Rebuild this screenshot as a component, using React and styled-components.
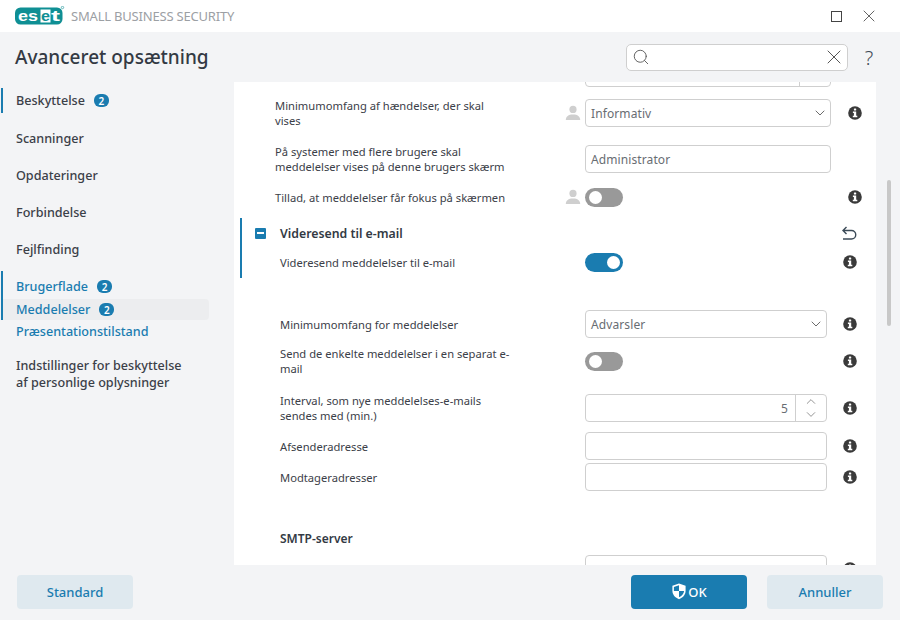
import React from 'react'
import styled, { createGlobalStyle } from 'styled-components'
import { ChevronDown, ChevronUp, Search, X } from 'lucide-react'

const Global = createGlobalStyle`
	html, body { margin: 0; padding: 0; height: 100%; overflow: hidden; }
	body { font-family: "Noto Sans", "Open Sans", sans-serif; color: #3b4048; }
	* { box-sizing: border-box; }
`

const NAV = [
	{ label: 'Beskyttelse', badge: 2, top: 6, bar: true },
	{ label: 'Scanninger', top: 13 },
	{ label: 'Opdateringer', top: 12 },
	{ label: 'Forbindelse', top: 12 },
	{ label: 'Fejlfinding', top: 12 },
]

function Logo() {
	return (
		<LogoSvg width="50" height="20" viewBox="0 0 50 20">
			<rect x="0" y="1.500" width="47.500" height="17" rx="5.500" fill="#0f8f94" />
			<rect x="25.500" y="3.500" width="10" height="13" fill="#fff" />
			<LogoText x="3" y="14.600" fill="#fff" textLength="20" lengthAdjust="spacingAndGlyphs">es</LogoText>
			<LogoText x="26" y="14.600" fill="#0f8f94" textLength="9" lengthAdjust="spacingAndGlyphs">e</LogoText>
			<LogoText x="36" y="14.600" fill="#fff" textLength="9" lengthAdjust="spacingAndGlyphs">t</LogoText>
			<circle cx="47.500" cy="1.500" r="1.200" fill="none" stroke="#0f8f94" strokeWidth=".6" />
		</LogoSvg>
	)
}

function InfoIcon() {
	return (
		<svg width="14" height="14" viewBox="0 0 14 14">
			<circle cx="7" cy="7" r="6.800" fill="#3a3a3a" />
			<rect x="5.900" y="2.400" width="2.300" height="2.200" rx=".6" fill="#fff" />
			<path d="M4.900 5.600h3.300v4.200h1.100v1.500H4.800V9.800h1.100V7.100h-1z" fill="#fff" />
		</svg>
	)
}

function UserIcon() {
	return (
		<svg width="16" height="16" viewBox="0 0 16 16">
			<circle cx="8" cy="4.400" r="3.600" fill="#cfcfcf" />
			<path d="M0.800 15c0-3.600 2.600-5.600 7.200-5.600s7.200 2 7.200 5.600z" fill="#cfcfcf" />
		</svg>
	)
}

function ShieldIcon() {
	return (
		<svg width="16" height="17" viewBox="0 0 16 17">
			<path d="M8 .6l6.600 2.200v5c0 4-2.800 6.900-6.600 8.400C4.200 14.700 1.400 11.800 1.400 7.800v-5z" fill="#fff" />
			<path d="M8 2.200v5.800h5.100c-.3 2.900-2.400 5-5.100 6.300V8H2.900V3.900z" fill="#1a7cb0" />
		</svg>
	)
}

function UndoIcon() {
	return (
		<svg width="16" height="15" viewBox="0 0 16 15" fill="none" stroke="#3b4a57" strokeWidth="1.400">
			<path d="M5.500 1 2 4.500 5.500 8M2 4.500h8.500a4 4 0 0 1 0 8.500H2" />
		</svg>
	)
}

function Spinner() {
	return (
		<SpinnerBox>
			<ChevronUp size={16} color="#555" strokeWidth={1} />
			<ChevronDown size={16} color="#555" strokeWidth={1} />
		</SpinnerBox>
	)
}

function Select({ value }) {
	return (
		<Field>
			<FieldText>{value}</FieldText>
			<ChevronDown size={16} color="#555" strokeWidth={1.3} />
		</Field>
	)
}

function Row({ label, control, user, top, height = 28, info = true }) {
	return (
		<RowGrid $top={top} $height={height}>
			<LabelCell>
				<Label>{label}</Label>
				{user && <UserSlot><UserIcon /></UserSlot>}
			</LabelCell>
			{control}
			{info && <InfoSlot><InfoIcon /></InfoSlot>}
		</RowGrid>
	)
}

export default function App() {
	return (
		<Window>
			<Global />
			<TitleBar>
				<Logo />
				<Product>SMALL BUSINESS SECURITY</Product>
				<WindowButtons>
					<MaxBox />
					<X size={20} color="#444" strokeWidth={1} />
				</WindowButtons>
			</TitleBar>
			<Header>
				<PageTitle>Avanceret opsætning</PageTitle>
				<SearchBox>
					<Search size={18} color="#555" strokeWidth={1.2} />
					<X size={24} color="#555" strokeWidth={1} />
				</SearchBox>
				<Help>?</Help>
			</Header>
			<Main>
				<Sidebar>
					{NAV.map(item => (
						<NavItem key={item.label} $top={item.top} $bar={item.bar}>
							{item.label}
							{item.badge && <Badge>{item.badge}</Badge>}
						</NavItem>
					))}
					<ActiveGroup>
						<NavItem $active $short>Brugerflade<Badge>2</Badge></NavItem>
						<NavItem $active $short $selected>Meddelelser<Badge>2</Badge></NavItem>
					</ActiveGroup>
					<NavItem $active $short $top={1}>Præsentationstilstand</NavItem>
					<NavMulti>Indstillinger for beskyttelse<br />af personlige oplysninger</NavMulti>
				</Sidebar>
				<Pane>
					<PaneInner>
						<SectionA>
							<RowGrid $height={28}>
								<span />
								<Field $end><Spinner /></Field>
							</RowGrid>
							<Row top={11} user label="Minimumomfang af hændelser, der skal vises" control={<Select value="Informativ" />} />
							<Row top={18} info={false} label="På systemer med flere brugere skal meddelelser vises på denne brugers skærm" control={<Field><FieldText>Administrator</FieldText></Field>} />
							<Row top={11} user label="Tillad, at meddelelser får fokus på skærmen" control={<Toggle />} />
						</SectionA>
						<SectionB>
							<SectionHead>
								<MinusBox />
								<SectionTitle>Videresend til e-mail</SectionTitle>
								<UndoIcon />
							</SectionHead>
							<Row label="Videresend meddelelser til e-mail" control={<Toggle $on />} />
							<Row top={34} height={27} label="Minimumomfang for meddelelser" control={<Select value="Advarsler" />} />
							<Row top={9} label="Send de enkelte meddelelser i en separat e-mail" control={<Toggle />} />
							<Row top={19} label="Interval, som nye meddelelses-e-mails sendes med (min.)" control={<Field $end><FiveText>5</FiveText><Spinner /></Field>} />
							<Row top={11} label="Afsenderadresse" control={<Field />} />
							<Row top={3} label="Modtageradresser" control={<Field />} />
							<SmtpTitle>SMTP-server</SmtpTitle>
							<Row top={7} label="" control={<Field />} />
						</SectionB>
					</PaneInner>
				</Pane>
				<ScrollGutter><ScrollThumb /></ScrollGutter>
			</Main>
			<Footer>
				<FooterButton>Standard</FooterButton>
				<FooterRight>
					<FooterButton $primary><ShieldIcon />OK</FooterButton>
					<FooterButton>Annuller</FooterButton>
				</FooterRight>
			</Footer>
		</Window>
	)
}

//-----Window-----
const Window = styled.div`
	width: 900px;
	height: 620px;
	display: flex;
	flex-direction: column;
	background: #f3f4f6;
	overflow: hidden;
`
const TitleBar = styled.div`
	height: 32px;
	flex: none;
	background: #fff;
	display: flex;
	align-items: center;
	padding-left: 15px;
`
const LogoSvg = styled.svg`
	flex: none;
	margin-top: -1px;
`
const LogoText = styled.text`
	font-family: "Liberation Sans", sans-serif;
	font-weight: 700;
	font-size: 15px;
`
const Product = styled.div`
	margin-left: 6px;
	font-size: 13px;
	color: #9ca0a4;
	letter-spacing: -.2px;
`
const WindowButtons = styled.div`
	margin-left: auto;
	display: flex;
	align-items: center;
	gap: 17px;
	padding-right: 21px;
`
const MaxBox = styled.div`
	width: 11px;
	height: 11px;
	border: 1px solid #444;
`

//-----Header-----
const Header = styled.div`
	height: 50px;
	flex: none;
	display: flex;
	align-items: center;
	padding-left: 15px;
`
const PageTitle = styled.h1`
	margin: 0;
	font-size: 19px;
	font-weight: 500;
	color: #333a44;
`
const SearchBox = styled.div`
	margin-left: auto;
	width: 222px;
	height: 27px;
	background: #fff;
	border: 1px solid #cfcfcf;
	border-radius: 5px;
	display: flex;
	align-items: center;
	justify-content: space-between;
	padding: 0 1px 0 5px;
`
const Help = styled.div`
	width: 42px;
	margin-right: 10px;
	text-align: center;
	font-size: 20px;
	font-weight: 300;
	color: #3f4a55;
`

//-----Sidebar-----
const Main = styled.div`
	flex: 1;
	min-height: 0;
	display: flex;
`
const Sidebar = styled.div`
	width: 234px;
	flex: none;
	display: flex;
	flex-direction: column;
`
const NavItem = styled.div`
	margin-top: ${p => p.$top || 0}px;
	height: ${p => (p.$short ? 21 : 25)}px;
	width: 209px;
	padding-left: ${p => (p.$bar ? 13 : 16)}px;
	margin-left: ${p => (p.$bar ? 1 : 0)}px;
	border-left: ${p => (p.$bar ? '2px solid #1a7cb0' : 'none')};
	border-radius: ${p => (p.$selected ? '0 4px 4px 0' : '0')};
	background: ${p => (p.$selected ? '#ecedef' : 'transparent')};
	font-size: 12.600px;
	font-weight: 500;
	color: ${p => (p.$active ? '#1a7cb0' : '#3b4048')};
	display: flex;
	align-items: center;
	gap: 9px;
`
const ActiveGroup = styled.div`
	margin-top: 9px;
	margin-left: 1px;
	border-left: 2px solid #1a7cb0;
	padding-top: 3px;
	${NavItem} { padding-left: 13px; width: 206px; }
	${NavItem}:first-child { height: 25px; }
`
const NavMulti = styled.div`
	margin-top: 15px;
	padding-left: 16px;
	font-size: 12.600px;
	font-weight: 500;
	line-height: 17px;
	color: #3b4048;
`
const Badge = styled.span`
	width: 15px;
	height: 13px;
	border-radius: 6px;
	background: #1a7cb0;
	color: #fff;
	font-size: 10px;
	font-weight: 600;
	display: inline-flex;
	align-items: center;
	justify-content: center;
`

//-----Pane-----
const Pane = styled.div`
	width: 642px;
	flex: none;
	background: #fff;
	overflow: hidden;
`
const PaneInner = styled.div`
	margin-top: -23px;
`
const SectionA = styled.div`
	padding-left: 41px;
	--label: 310px;
	--control: 246px;
	--gap: 17px;
`
const SectionB = styled.div`
	margin: 7px 0 0 6px;
	padding-left: 38px;
	border-left: 2px solid transparent;
	--label: 305px;
	--control: 242px;
	--gap: 16px;
	position: relative;
	&::before {
		content: '';
		position: absolute;
		left: -2px;
		top: 0;
		width: 2px;
		height: 60px;
		background: #1a7cb0;
	}
`
const RowGrid = styled.div`
	margin-top: ${p => p.$top || 0}px;
	height: ${p => p.$height}px;
	display: grid;
	grid-template-columns: var(--label) var(--control) auto;
	align-items: center;
`
const LabelCell = styled.div`
	display: flex;
	align-items: center;
	height: 100%;
`
const Label = styled.div`
	width: 234px;
	font-size: 11.200px;
	line-height: 15px;
	color: #3b4048;
`
const UserSlot = styled.div`
	margin-left: auto;
	margin-right: 4px;
	display: flex;
`
const InfoSlot = styled.div`
	display: flex;
	justify-self: start;
	padding-left: var(--gap);
	svg { flex: none; }
`
const Field = styled.div`
	height: 28px;
	width: 100%;
	background: #fff;
	border: 1px solid #cfcfcf;
	border-radius: 4px;
	display: flex;
	align-items: center;
	justify-content: ${p => (p.$end ? 'flex-end' : 'space-between')};
	padding: 0 ${p => (p.$end ? 0 : 2)}px 0 5px;
`
const FieldText = styled.span`
	font-size: 12px;
	color: #686d73;
	letter-spacing: .1px;
`
const FiveText = styled(FieldText)`
	margin-right: 7px;
`
const SpinnerBox = styled.div`
	width: 31px;
	height: 100%;
	border-left: 1px solid #cfcfcf;
	display: flex;
	flex-direction: column;
	align-items: center;
	justify-content: center;
	svg { margin: -1px 0; }
`
const Toggle = styled.div`
	width: 38px;
	height: 19px;
	border-radius: 10px;
	background: ${p => (p.$on ? '#1a7cb0' : '#999')};
	position: relative;
	&::after {
		content: '';
		position: absolute;
		top: 3px;
		left: ${p => (p.$on ? '22px' : '4px')};
		width: 13px;
		height: 13px;
		border-radius: 50%;
		background: #fff;
	}
`
const SectionHead = styled.div`
	height: 30px;
	display: grid;
	grid-template-columns: 10px 1fr 16px;
	align-items: center;
	margin-left: -25px;
	column-gap: 15px;
	width: 602px;
`
const MinusBox = styled.div`
	width: 11px;
	height: 11px;
	border-radius: 1px;
	background: #1a7cb0;
	display: flex;
	align-items: center;
	justify-content: center;
	&::after {
		content: '';
		width: 7px;
		height: 2px;
		background: #fff;
	}
`
const SectionTitle = styled.div`
	font-size: 12.300px;
	font-weight: 600;
	color: #333a44;
`
const SmtpTitle = styled.div`
	margin-top: 39px;
	font-size: 12px;
	font-weight: 600;
	line-height: 18px;
	color: #333a44;
`

//-----Scroll-----
const ScrollGutter = styled.div`
	flex: 1;
	padding: 98px 0 0 11px;
`
const ScrollThumb = styled.div`
	width: 4px;
	height: 146px;
	border-radius: 2px;
	background: #c8c8c8;
`

//-----Footer-----
const Footer = styled.div`
	height: 55px;
	flex: none;
	display: flex;
	align-items: center;
	justify-content: space-between;
	padding: 0 17px 2px;
`
const FooterRight = styled.div`
	display: flex;
	gap: 20px;
`
const FooterButton = styled.button`
	width: 116px;
	height: 34px;
	border: none;
	border-radius: 4px;
	background: ${p => (p.$primary ? '#1a7cb0' : '#dfe9ef')};
	color: ${p => (p.$primary ? '#fff' : '#1a7cb0')};
	font-family: inherit;
	font-size: 13px;
	font-weight: 500;
	display: flex;
	align-items: center;
	justify-content: center;
	gap: 1px;
`
